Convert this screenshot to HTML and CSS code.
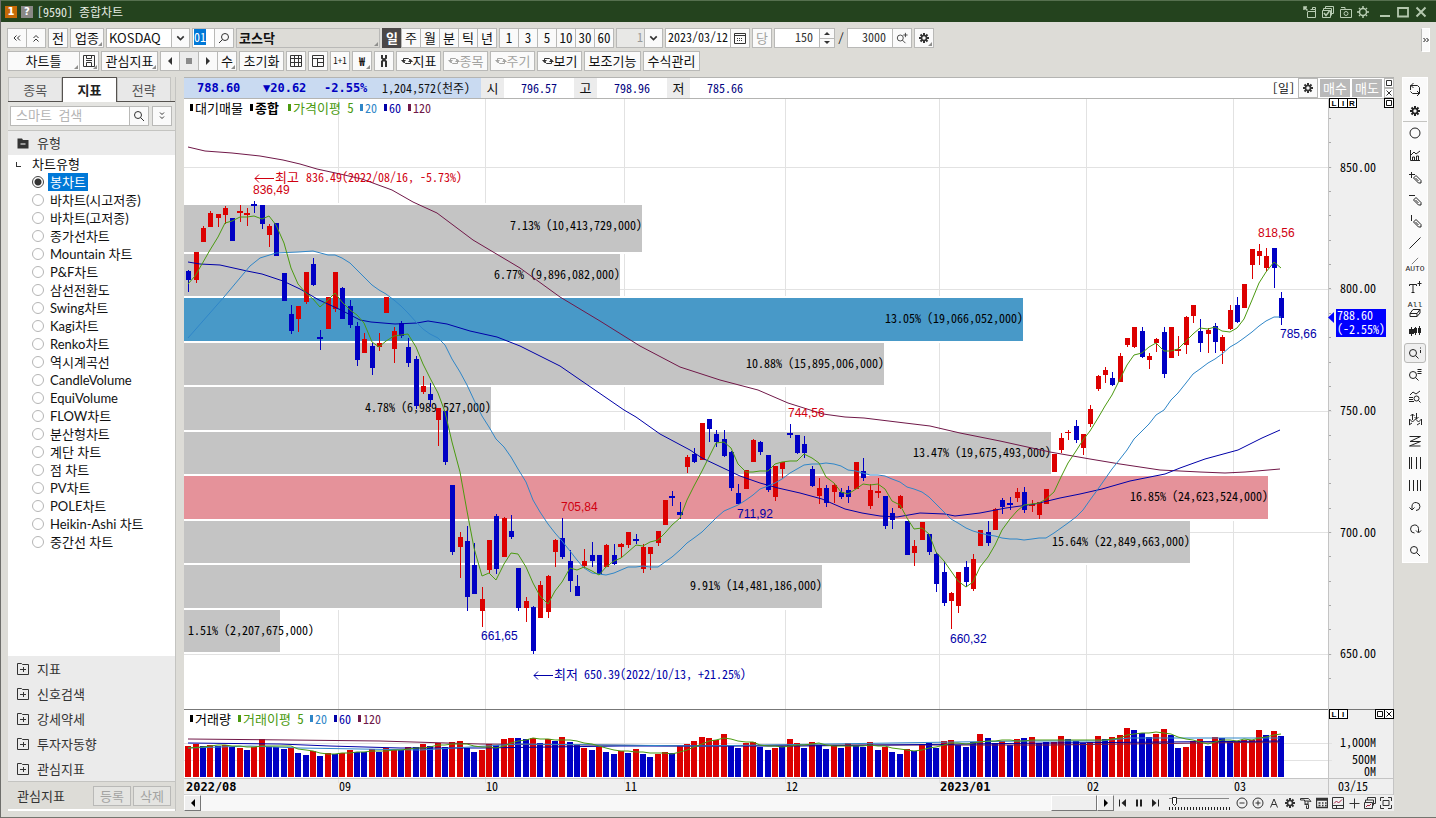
FILE: index.html
```html
<!DOCTYPE html>
<html lang="ko">
<head>
<meta charset="utf-8">
<title>[9590] 종합차트</title>
<link rel="stylesheet" href="styles.css">
</head>
<body>
<svg class="defs" aria-hidden="true">
  <symbol id="i-gear" viewBox="0 0 12 12"><path d="M6 1v10M1 6h10M2.500 2.500l7 7M9.500 2.500l-7 7" stroke="currentColor" stroke-width="2"/><circle cx="6" cy="6" r="3.200" fill="currentColor"/><circle cx="6" cy="6" r="1.700" fill="#fafafa"/></symbol>
  <symbol id="i-sun" viewBox="0 0 12 12"><circle cx="6" cy="6" r="3.500" fill="none" stroke="currentColor" stroke-width="1.500"/><path d="M6 0v2M6 10v2M0 6h2M10 6h2M2 2l1 1M9 9l1 1M10 2L9 3M2 10l1-1" stroke="currentColor" stroke-width="1.500"/></symbol>
  <symbol id="i-search" viewBox="0 0 12 12"><circle cx="5" cy="5" r="3.500" fill="none" stroke="currentColor"/><path d="M7.500 7.500L11 11" stroke="currentColor"/></symbol>
  <symbol id="i-searchr" viewBox="0 0 12 12"><circle cx="7" cy="5" r="3.500" fill="none" stroke="currentColor"/><path d="M4.500 7.500L1 11" stroke="currentColor"/></symbol>
  <symbol id="i-down" viewBox="0 0 12 12"><path d="M3 4.500l3 3 3-3" fill="none" stroke="currentColor" stroke-width="1.500"/></symbol>
  <symbol id="i-ddown" viewBox="0 0 12 12"><path d="M4 2.500l2 2 2-2M4 6.500l2 2 2-2" fill="none" stroke="currentColor"/></symbol>
  <symbol id="i-dup" viewBox="0 0 12 12"><path d="M3.500 6L6 3.500 8.500 6M3.500 9.500L6 7l2.500 2.500" fill="none" stroke="currentColor"/></symbol>
  <symbol id="i-dleft" viewBox="0 0 12 12"><path d="M5.500 3.500L3 6l2.500 2.500M9 3.500L6.500 6 9 8.500" fill="none" stroke="currentColor"/></symbol>
  <symbol id="i-dright" viewBox="0 0 12 12"><path d="M3.500 4l2 2-2 2M6.500 4l2 2-2 2" fill="none" stroke="currentColor"/></symbol>
  <symbol id="i-left" viewBox="0 0 12 12"><path d="M8 2v8L4 6z" fill="currentColor"/></symbol>
  <symbol id="i-right" viewBox="0 0 12 12"><path d="M4 2v8l4-4z" fill="currentColor"/></symbol>
  <symbol id="i-stop" viewBox="0 0 12 12"><path d="M3 3h6v6H3z" fill="currentColor"/></symbol>
  <symbol id="i-save" viewBox="0 0 12 12"><path d="M.5.5h11v11H.5zM3.500.5v3h5v-3M3.500 11.500v-4h5v4M3 5.500h6" fill="none" stroke="currentColor"/></symbol>
  <symbol id="i-grid" viewBox="0 0 12 12"><path d="M.5.5h11v11H.5zM.5 3.500h11M.5 7.500h11M4.500 .5v11M8.500 .5v11" fill="none" stroke="currentColor"/></symbol>
  <symbol id="i-layout" viewBox="0 0 12 12"><path d="M.5.5h11v11H.5zM.5 3.500h11M5.500 3.500v8M5.500 7.500h6" fill="none" stroke="currentColor"/></symbol>
  <symbol id="i-cal" viewBox="0 0 12 12"><path d="M.5 1.500h11v10H.5zM.5 3.500h11" fill="none" stroke="currentColor"/><path d="M3 6.500h6M3 8.500h6" stroke="currentColor" stroke-dasharray="1 1"/></symbol>
  <symbol id="i-tool" viewBox="0 0 12 12"><path d="M4 0v3l4 3.500V12M8 0v3L4 6.500V12" fill="none" stroke="currentColor" stroke-width="2"/></symbol>
  <symbol id="i-cycle" viewBox="0 0 12 12"><path d="M2.500 5.500v-2h5l2 2M9.500 6.500v2h-5l-2-2" fill="none" stroke="currentColor"/><path d="M0 5h5L2.500 8zM7 7h5L9.500 4z" fill="currentColor"/></symbol>
  <symbol id="i-zoomadd" viewBox="0 0 14 14"><circle cx="5" cy="7" r="3.500" fill="none" stroke="currentColor"/><path d="M7.500 9.500L11 13M8.500 3.500h5M11 1v5" stroke="currentColor"/></symbol>
  <symbol id="i-folder" viewBox="0 0 12 12"><path d="M1 1.500h4l1 1.500h5.500v8.500H.5V1.500z" fill="currentColor"/><path d="M3.500 7h5" stroke="#fff"/></symbol>
  <symbol id="i-plusbox" viewBox="0 0 12 12"><path d="M.5.5h4l1 1h6v10H.5zM3 6.500h6M6.500 4v5" fill="none" stroke="currentColor"/></symbol>
  <symbol id="i-out" viewBox="0 0 14 12"><path d="M1 4V1h3M1 1l3.500 3.500" fill="none" stroke="currentColor" stroke-width="1.500"/><path d="M4.500 5.500v6h8v-8h-5M5 5.500h7M9.500 3.500v-2h3v2" fill="none" stroke="currentColor"/></symbol>
  <symbol id="i-copy" viewBox="0 0 14 12"><path d="M4.500 2.500V.5h8v7h-2M2.500 4V2.500h8v7M1.500 4.500h8v7h-8z" fill="none" stroke="currentColor"/><path d="M3 7l2 2.500L8.500 5" fill="none" stroke="currentColor" stroke-width="1.500"/></symbol>
  <symbol id="i-camera" viewBox="0 0 14 12"><path d="M1.500 3.500h11v8h-11zM2 1.500h4v2" fill="none" stroke="currentColor"/><circle cx="7" cy="7.500" r="2" fill="none" stroke="currentColor"/></symbol>
  <symbol id="i-loop" viewBox="0 0 14 14"><path d="M2.500 8V3.500h7l2 2V8M11.500 8v3.500h-7l-2-2M5.500 1L3 3.500 5.500 6M9 9l2.500 2.500L9 14" fill="none" stroke="currentColor"/></symbol>
  <symbol id="i-circle" viewBox="0 0 14 14"><circle cx="7" cy="7" r="5" fill="none" stroke="currentColor"/></symbol>
  <symbol id="i-area" viewBox="0 0 14 14"><path d="M2.500 2v10.500H12M3 7l3-3 2 2 4-3M4.500 12V9h2v3M8.500 12V8h2v4" fill="none" stroke="currentColor"/></symbol>
  <symbol id="i-penplus" viewBox="0 0 14 14"><path d="M1 4.500h6M3.500 2v6M8 5.500l5 5v2.500h-2.500l-5-5zM7.500 8l3 3" fill="none" stroke="currentColor"/></symbol>
  <symbol id="i-penminus" viewBox="0 0 14 14"><path d="M1 3.500h6M8 5.500l5 5v2.500h-2.500l-5-5zM7.500 8l3 3" fill="none" stroke="currentColor"/></symbol>
  <symbol id="i-penbar" viewBox="0 0 14 14"><path d="M3.500 1v6M8 5.500l5 5v2.500h-2.500l-5-5zM7.500 8l3 3" fill="none" stroke="currentColor"/></symbol>
  <symbol id="i-line" viewBox="0 0 14 14"><path d="M1.500 12.500l11-11" stroke="currentColor"/></symbol>
  <symbol id="i-text" viewBox="0 0 14 14"><path d="M1.500 6V4.500h7V6M5 4.500V12M3.500 12.500h3M9.500 3.500h4M11.500 1v5" fill="none" stroke="currentColor"/></symbol>
  <symbol id="i-eraser" viewBox="0 0 14 8"><path d="M2 4.500L5 .5h7l-3 4zM2 4.500v3h7l3-3.500V.5M9 4.500v3" fill="none" stroke="currentColor"/></symbol>
  <symbol id="i-candles" viewBox="0 0 14 14"><path d="M1 5h5v5H1zM6 4h3v5H6zM10 4h3v5h-3z" fill="currentColor"/><path d="M3.500 3v9M7.500 3v8M11.500 2v9" stroke="currentColor"/></symbol>
  <symbol id="i-info" viewBox="0 0 14 14"><circle cx="5" cy="7" r="3.500" fill="none" stroke="currentColor"/><path d="M7.500 9.500L10.500 12.500M12.500 4v3M12.500 1.500v1" stroke="currentColor"/></symbol>
  <symbol id="i-zlist" viewBox="0 0 14 14"><circle cx="5" cy="7" r="3.500" fill="none" stroke="currentColor"/><path d="M7.500 9.500L10.500 12.500M9.500 1.500h4M9.500 3.500h4M9.500 5.500h4" stroke="currentColor"/></symbol>
  <symbol id="i-zchart" viewBox="0 0 14 14"><circle cx="8.500" cy="8.500" r="2.500" fill="none" stroke="currentColor"/><path d="M10.500 10.500l2 2M1 7.500h4M1 9.500h4M1 11.500h5M2 5l3-3 3 2 4-3" fill="none" stroke="currentColor"/></symbol>
  <symbol id="i-arrows" viewBox="0 0 14 14"><path d="M1.500 13V7l3 3 3-3 3 3 3-3v6M4.500 8V2M2.500 4l2-2 2 2M8.500 1v6M6.500 5l2 2 2-2M1 13l3-2M9 13l3-2" fill="none" stroke="currentColor"/></symbol>
  <symbol id="i-zig" viewBox="0 0 14 14"><path d="M1.500 2.500h11L2 7.500h10.500l-11 4.500h11" fill="none" stroke="currentColor"/></symbol>
  <symbol id="i-bars" viewBox="0 0 14 14"><path d="M1.500 1v12M3.500 1v12M8.500 1v12M12.500 1v12" stroke="currentColor"/></symbol>
  <symbol id="i-bars2" viewBox="0 0 14 14"><path d="M1.500 2v11M5.500 2v11M9.500 2v11M12.500 2v11" stroke="currentColor"/></symbol>
  <symbol id="i-undo" viewBox="0 0 14 14"><path d="M4 9V6a4 4 0 1 1 4 4.500M1.500 7.500L4 10l2.500-2.500" fill="none" stroke="currentColor"/></symbol>
  <symbol id="i-redo" viewBox="0 0 14 14"><path d="M10.500 10V6.500a4 4 0 1 0-4 4.500M8 8.500l2.500 2.500 2.500-2.500" fill="none" stroke="currentColor"/></symbol>
  <symbol id="i-first" viewBox="0 0 12 12"><path d="M2.500 2.500v7" stroke="currentColor"/><path d="M9 2v8L4.500 6z" fill="currentColor"/></symbol>
  <symbol id="i-last" viewBox="0 0 12 12"><path d="M9.500 2.500v7" stroke="currentColor"/><path d="M3 2v8l4.500-4z" fill="currentColor"/></symbol>
  <symbol id="i-pause" viewBox="0 0 12 12"><path d="M4 2.500v7M8 2.500v7" stroke="currentColor" stroke-width="2"/></symbol>
  <symbol id="i-minus" viewBox="0 0 12 12"><circle cx="6" cy="6" r="5" fill="none" stroke="currentColor"/><path d="M3.500 6h5" stroke="currentColor"/></symbol>
  <symbol id="i-plus" viewBox="0 0 12 12"><circle cx="6" cy="6" r="5" fill="none" stroke="currentColor"/><path d="M3.500 6h5M6 3.500v5" stroke="currentColor"/></symbol>
  <symbol id="i-a" viewBox="0 0 12 12"><path d="M2.500 10.500L6 2l3.500 8.500M4 7.500h4" fill="none" stroke="currentColor"/></symbol>
  <symbol id="i-hammer" viewBox="0 0 12 12"><path d="M.5 3V1.500h8L11 4.500 8.500 4H4.500V3zM5 4v3h3V4M4.500 7.500h4v4h-2v-3" fill="none" stroke="currentColor"/></symbol>
  <symbol id="i-table" viewBox="0 0 12 12"><path d="M.5 1.500h11v9H.5zM.5 3h11M2.500 6h2M6 6h1.500M9 6h1.500M2.500 8.500h2M6 8.500h1.500M9 8.500h1.500" fill="none" stroke="currentColor" stroke-width="1.300"/></symbol>
  <symbol id="i-chart" viewBox="0 0 12 12"><path d="M.5.5h11v11H.5zM.5 8.500h11M4.500 8.500v3" fill="none" stroke="currentColor"/><path d="M2 6.500l2.500-2.500 2 2L10 2.500" fill="none" stroke="#a02040"/></symbol>
  <symbol id="i-cross" viewBox="0 0 12 12"><path d="M1.500 6.500h10M6.500 1.500v10" stroke="currentColor"/></symbol>
  <symbol id="i-wins" viewBox="0 0 12 12"><path d="M3.500 3V.5h8v6H9M1.500 5V3h8v5.500M.5 5.500h8v6h-8z" fill="none" stroke="currentColor"/><path d="M2 10l2-2 1 1 2-2" fill="none" stroke="#a02040"/></symbol>
  <symbol id="i-full" viewBox="0 0 12 12"><path d="M.5 4V.5H4M8 .5h3.500V4M.5 8v3.500H4M8 11.500h3.500V8M3 3.500h6v5H3z" fill="none" stroke="currentColor"/></symbol>
  <symbol id="i-box" viewBox="0 0 8 8"><path d="M1.500 1.500h5v5h-5z" fill="none" stroke="currentColor"/></symbol>
  <symbol id="i-x" viewBox="0 0 8 8"><path d="M1.500 1.500l5 5M6.500 1.500l-5 5" fill="none" stroke="currentColor"/></symbol>
</svg>

<div class="window">
  <header class="titlebar">
    <span class="badge badge-one">1</span><span class="badge badge-q">?</span>
    <h1 class="title">[9590] 종합차트</h1>
    <div class="wintools">
      <svg class="ic14"><use href="#i-out"/></svg><svg class="ic14"><use href="#i-copy"/></svg><svg class="ic14"><use href="#i-camera"/></svg><svg class="ic12"><use href="#i-sun"/></svg>
    </div>
    <div class="winbtns">
      <button aria-label="최소화"><svg viewBox="0 0 12 12"><path d="M1 10h10" stroke="currentColor" stroke-width="2"/></svg></button>
      <button aria-label="최대화"><svg viewBox="0 0 12 12"><path d="M1 2h10v8.500H1z" fill="none" stroke="currentColor" stroke-width="1.800"/></svg></button>
      <button aria-label="닫기"><svg viewBox="0 0 12 12"><path d="M1.500 1.500l9 9M10.500 1.500l-9 9" stroke="currentColor" stroke-width="2"/></svg></button>
    </div>
  </header>

  <div class="toolbars">
    <div class="bars">
      <div class="bar">
        <div class="group"><button class="btn sq" aria-label="처음"><svg class="ic12"><use href="#i-dleft"/></svg></button><button class="btn sq" aria-label="접기"><svg class="ic12"><use href="#i-dup"/></svg></button></div>
        <button class="btn sq">전</button>
        <button class="btn w34 corner">업종</button>
        <div class="group combo">
          <select class="field code" aria-label="종목코드"><option>KOSDAQ</option></select><svg class="arrow"><use href="#i-down"/></svg>
        </div>
        <div class="group"><input class="field num2" value="01" aria-label="번호"><button class="btn sq" aria-label="검색"><svg class="ic12"><use href="#i-searchr"/></svg></button></div>
        <button class="btn name corner">코스닥</button>
        <div class="group"><button class="btn sq on">일</button><button class="btn sq">주</button><button class="btn sq">월</button><button class="btn sq">분</button><button class="btn sq">틱</button><button class="btn sq">년</button></div>
        <div class="group"><button class="btn sq">1</button><button class="btn sq">3</button><button class="btn sq">5</button><button class="btn sq">10</button><button class="btn sq">30</button><button class="btn sq">60</button></div>
        <div class="group combo"><select class="field tick" aria-label="단위" disabled><option>1</option></select><svg class="arrow"><use href="#i-down"/></svg></div>
        <div class="group"><input class="field date" value="2023/03/12" aria-label="날짜"><button class="btn sq" aria-label="달력"><svg class="ic12"><use href="#i-cal"/></svg></button></div>
        <button class="btn sq" disabled>당</button>
        <div class="group"><input class="field count" value="150" aria-label="봉 개수"><span class="spin"><button aria-label="증가"></button><button class="dn" aria-label="감소"></button></span></div>
        <span class="slash">/</span>
        <div class="group"><input class="field count" value="3000" aria-label="전체 개수"><button class="btn sq" aria-label="확대"><svg class="ic14"><use href="#i-zoomadd"/></svg></button></div>
        <button class="btn sq corner" aria-label="설정"><svg class="ic12"><use href="#i-gear"/></svg></button>
      </div>
      <div class="bar">
        <div class="group"><button class="btn w72 corner">차트틀</button><button class="btn sq corner" aria-label="저장"><svg class="ic12"><use href="#i-save"/></svg></button></div>
        <div class="group"><button class="btn w58 corner">관심지표</button></div>
        <div class="group"><button class="btn sq" aria-label="이전"><svg class="ic12"><use href="#i-left"/></svg></button><button class="btn sq dim" aria-label="정지"><svg class="ic12"><use href="#i-stop"/></svg></button><button class="btn sq" aria-label="다음"><svg class="ic12"><use href="#i-right"/></svg></button><button class="btn sq corner">수</button></div>
        <button class="btn w46">초기화</button>
        <button class="btn sq" aria-label="격자"><svg class="ic12"><use href="#i-grid"/></svg></button>
        <button class="btn sq" aria-label="배치"><svg class="ic12"><use href="#i-layout"/></svg></button>
        <button class="btn sq tiny">1+1</button>
        <button class="btn sq corner won">₩</button>
        <button class="btn sq" aria-label="도구"><svg class="ic12"><use href="#i-tool"/></svg></button>
        <button class="btn w46"><svg class="ic12"><use href="#i-cycle"/></svg>지표</button>
        <button class="btn w46" disabled><svg class="ic12"><use href="#i-cycle"/></svg>종목</button>
        <button class="btn w46" disabled><svg class="ic12"><use href="#i-cycle"/></svg>주기</button>
        <button class="btn w46"><svg class="ic12"><use href="#i-cycle"/></svg>보기</button>
        <button class="btn w58">보조기능</button>
        <button class="btn w58">수식관리</button>
      </div>
    </div>
    <button class="more" aria-label="더보기"><svg class="ic12"><use href="#i-dright"/></svg></button>
  </div>

  <main class="body">
    <aside class="side">
      <nav class="tabs"><button>종목</button><button class="on">지표</button><button>전략</button></nav>
      <div class="search"><div class="group"><input class="field query" placeholder="스마트 검색" aria-label="스마트 검색"><button class="btn sq" aria-label="찾기"><svg class="ic12"><use href="#i-search"/></svg></button></div><button class="btn sq" aria-label="펼치기"><svg class="ic12"><use href="#i-ddown"/></svg></button></div>
      <h2 class="sect"><svg class="ic12"><use href="#i-folder"/></svg>유형</h2>
      <div class="tree"><p class="root"><i class="elbow"></i>차트유형</p><ul id="types"></ul></div>
      <ul class="folders">
        <li><svg class="ic12"><use href="#i-plusbox"/></svg>지표</li><li><svg class="ic12"><use href="#i-plusbox"/></svg>신호검색</li><li><svg class="ic12"><use href="#i-plusbox"/></svg>강세약세</li><li><svg class="ic12"><use href="#i-plusbox"/></svg>투자자동향</li><li><svg class="ic12"><use href="#i-plusbox"/></svg>관심지표</li>
      </ul>
      <div class="fav"><span>관심지표</span><button class="btn" disabled>등록</button><button class="btn" disabled>삭제</button></div>
    </aside>

    <section class="chartbox">
      <div class="quote">
        <div class="now"><b class="last">788.60</b><b class="diff">▼20.62</b><b class="rate">-2.55%</b><span class="vol">1,204,572(천주)</span></div>
        <span class="k">시</span><span class="v">796.57</span><span class="k">고</span><span class="v">798.96</span><span class="k">저</span><span class="v">785.66</span>
        <span class="fill"></span><span class="mode">[일]</span>
        <button class="btn sq" aria-label="차트 설정"><svg class="ic12"><use href="#i-gear"/></svg></button><button class="trade">매수</button><button class="trade">매도</button>
        <span class="mini"><button aria-label="창 확대"><svg><use href="#i-box"/></svg></button><button aria-label="창 닫기"><svg><use href="#i-x"/></svg></button></span>
      </div>
      <div class="plot">
        <svg id="chart" viewBox="184 98 1210 697" role="img" aria-label="코스닥 일봉 차트"></svg>
      </div>
      <div class="scroll">
        <button class="sbtn" aria-label="왼쪽"><svg class="ic12"><use href="#i-left"/></svg></button><span class="track"><span class="thumb"></span></span><button class="sbtn" aria-label="오른쪽"><svg class="ic12"><use href="#i-right"/></svg></button>
        <div class="media"><svg class="ic12"><use href="#i-first"/></svg><svg class="ic12"><use href="#i-pause"/></svg><svg class="ic12"><use href="#i-last"/></svg></div>
        <svg class="ruler" viewBox="0 0 62 14"><path d="M0 2.500h60" stroke="#888"/><path d="M0 12.500h61" stroke="#222" stroke-width="3" stroke-dasharray="1 2"/><path d="M3.500 1.500h4v6l-2 2-2-2z" fill="#fff" stroke="#222"/></svg>
        <div class="view"><svg><use href="#i-minus"/></svg><svg><use href="#i-plus"/></svg><svg><use href="#i-a"/></svg><svg><use href="#i-gear"/></svg><svg><use href="#i-hammer"/></svg><svg><use href="#i-table"/></svg><svg><use href="#i-chart"/></svg><svg><use href="#i-cross"/></svg><svg><use href="#i-wins"/></svg><svg><use href="#i-full"/></svg></div>
      </div>
    </section>

    <nav class="tools" id="tools" aria-label="그리기 도구"></nav>
  </main>
</div>
<script src="app.js"></script>
</body>
</html>
```
FILE: styles.css
```css
* { box-sizing: border-box; }
body { margin: 0; background: #dddcd7; color: #111; font: 12px/16px "Noto Sans Mono CJK KR", "Noto Sans CJK KR", sans-serif; }
button, input, select { font: inherit; color: inherit; margin: 0; padding: 0; border-radius: 0; }
ul, p, h1, h2 { margin: 0; padding: 0; list-style: none; font-size: inherit; font-weight: normal; }
.defs { position: absolute; width: 0; height: 0; }
.ic12 { width: 12px; height: 12px; flex: none; display: block; }
.ic14 { width: 14px; height: 12px; flex: none; display: block; }
.window { min-height: 100vh; display: flex; flex-direction: column; border-left: 1px solid #6e6e6b; border-bottom: 2px solid #75756f; }

.titlebar { display: flex; align-items: center; gap: 4px; height: 22px; padding: 0 9px 0 4px; background: #24431e; border-top: 1px solid #56704f; color: #e4ebe2; }
.badge { width: 12px; height: 12px; font: bold 10px/12px "DejaVu Sans", sans-serif; text-align: center; color: #fff; }
.badge-one { background: #c66a08; }
.badge-q { background: #8a8886; }
.title { flex: 1; }
.wintools, .winbtns { display: flex; align-items: center; gap: 4px; color: #b9cdb4; }
.winbtns { margin-left: 6px; gap: 6px; }
.winbtns button { width: 12px; height: 12px; border: 0; background: none; color: #b4c8ae; }
.winbtns svg { display: block; width: 12px; height: 12px; }

.toolbars { display: flex; align-items: flex-start; padding: 6px; }
.bars { flex: 1; display: flex; flex-direction: column; gap: 3px; }
.bar { display: flex; align-items: center; gap: 2px; height: 20px; }
.group { display: flex; }
.group > * + .btn { margin-left: -1px; }
.btn { position: relative; display: inline-flex; align-items: center; justify-content: center; height: 20px; border: 1px solid #b9b9b7; background: #fafafa; white-space: nowrap; color: #111; font-size: 13px; }
.btn svg { color: #333; }
.btn:disabled, .btn:disabled svg { color: #a3a3a1; }
.sq { width: 20px; flex: none; }
.w34 { width: 34px; } .w46 { width: 45px; } .w58 { width: 57px; } .w72 { width: 73px; }
.corner::after { content: ""; position: absolute; right: 1px; bottom: 1px; border: 2px solid transparent; border-right-color: #8e8e8c; border-bottom-color: #8e8e8c; }
.btn.on { background: #4b4848; border-color: #4b4848; color: #fff; font-weight: bold; }
.dim { background: #ececec; }
.dim svg { color: #8b8b8b; }
.name { width: 144px; justify-content: flex-start; padding-left: 2px; background: #dddcd7; font-weight: bold; }
.tiny { font-size: 9px; }
.won { font-weight: bold; font-size: 12px; }
.field { height: 20px; border: 1px solid #b9b9b7; background: #fff; outline: 0; line-height: 16px; padding-bottom: 3px; }
.combo { position: relative; }
.combo select { appearance: none; }
.combo .arrow { position: absolute; right: 1px; top: 1px; width: 18px; height: 18px; padding: 2px; border-left: 1px solid #b9b9b7; background: #fafafa; color: #333; }
.combo .code { width: 84px; padding: 0 0 1px 2px; font: 13px/16px "Noto Sans CJK KR", sans-serif; }
.num2 { width: 23px; padding-left: 1px; }
.num2::selection { background: #0078d7; color: #fff; }
.tick { width: 47px; color: #999; background: #e8e8e6; }
.combo .tick { padding-left: 20px; opacity: 1; }
.date { width: 66px; padding-left: 2px; }
.count { width: 46px; padding-right: 6px; text-align: right; color: #333; }
.spin { display: flex; flex-direction: column; width: 15px; border: 1px solid #b9b9b7; border-left: 0; background: #fafafa; }
.spin button { flex: 1; display: flex; align-items: center; justify-content: center; border: 0; background: none; }
.spin button::after { content: ""; border: 3px solid transparent; border-top: 0; border-bottom: 3px solid #333; }
.spin .dn { border-top: 1px solid #b9b9b7; }
.spin .dn::after { border-top: 3px solid #333; border-bottom: 0; }
.slash { width: 8px; text-align: center; }
.more { width: 9px; height: 24px; border: 1px solid #fff; border-left-color: #b9b9b7; background: #fafafa; display: flex; align-items: center; justify-content: center; }

.body { flex: 1; display: flex; align-items: stretch; gap: 8px; padding: 0 8px 6px 7px; }
.side { width: 168px; flex: none; display: flex; flex-direction: column; border-right: 1px solid #c4c4c1; color: #333; background: #ebebeb; font-size: 13px; }
.tabs { display: flex; height: 25px; padding-right: 4px; background: #dddcd7; border-bottom: 1px solid #55524f; }
.tabs button { flex: 1; height: 24px; border: 1px solid #c4c4c1; border-bottom: 0; background: #e8e8e8; color: #555; }
.tabs .on { height: 25px; background: #fff; border-color: #55524f; font-weight: bold; color: #222; }
.search { display: flex; gap: 3px; padding: 4px 3px 4px 2px; background: #e4e4e1; border-bottom: 1px solid #c4c4c1; }
.search .group { flex: 1; }
.query { width: 10px; flex: 1; padding-left: 5px; }
.query::placeholder { color: #b4b4b4; }
.sect { display: flex; align-items: center; gap: 8px; height: 24px; padding-left: 9px; }
.tree { flex: 1; background: #fff; color: #111; font: 13px/18px Lato, "Noto Sans CJK KR", sans-serif; }
.root { display: flex; align-items: center; }
.elbow { width: 5px; height: 5px; margin: 0 11px 0 8px; border-left: 1px solid #333; border-bottom: 1px solid #333; }
.tree li { height: 18px; padding-left: 24px; }
.tree label { display: flex; align-items: center; gap: 4px; }
.tree input { appearance: none; width: 12px; height: 12px; border: 1px solid #b5b5b5; border-radius: 50%; background: #fff; }
.tree input:checked { border-color: #444; background: radial-gradient(#333 0 3px, #fff 4px); }
.tree label span { padding: 0 2px; }
.tree input:checked + span { background: #0078d7; color: #fff; }
.folders li { display: flex; align-items: center; gap: 8px; height: 25px; padding-left: 9px; }
.fav { display: flex; align-items: center; gap: 2px; height: 30px; padding: 0 4px 0 9px; background: #dddcd7; border-top: 1px solid #c4c4c1; border-bottom: 2px solid #fff; }
.fav span { flex: 1; }
.fav .btn { width: 38px; background: #e4e4e1; }

.chartbox { flex: 1; min-width: 0; background: #fff; border-top: 1px solid #b4b4b2; align-self: flex-start; }
.quote { display: flex; align-items: center; height: 20px; }
.now { display: flex; align-items: center; width: 297px; height: 20px; background: #c9daf1; padding-left: 13px; }
.now b { font: bold 12px/20px "DejaVu Sans Mono", monospace; color: #0000c0; }
.last { width: 66px; }
.diff { width: 61px; }
.rate { width: 58px; }
.k { width: 23px; line-height: 20px; text-align: center; background: #ececec; font-size: 13px; }
.v { width: 70px; text-align: center; color: #000080; }
.fill { flex: 1; }
.mode { width: 26px; }
.quote .btn { margin-right: 2px; }
.trade { width: 30px; height: 18px; margin-right: 2px; border: 0; background: #b9b9b9; color: #fff; font-size: 13px; }
.mini { display: flex; flex-direction: column; width: 10px; height: 20px; }
.mini button { flex: 1; display: flex; align-items: center; justify-content: center; border: 1px solid #b9b9b7; background: #fff; color: #333; }
.mini svg { width: 8px; height: 8px; flex: none; }
.plot svg { display: block; width: 100%; height: auto; }
.plot text { font-size: 12px; fill: #000; }
.plot .small { font: 12px "Liberation Sans", sans-serif; }
.plot .bold { font-weight: bold; }
.plot .ko { font-size: 13px; }
.plot .up { fill: #d00010; }
.plot .low { fill: #0000a8; }
.plot .white { fill: #fff; }
.plot .box { font: bold 8px "Liberation Sans", sans-serif; }
.plot .month { font: bold 12px "DejaVu Sans Mono", monospace; }

.scroll { display: flex; align-items: center; height: 16px; background: #efefef; color: #222; }
.sbtn { width: 17px; height: 16px; display: flex; align-items: center; justify-content: center; border: 1px solid #fff; border-right-color: #777; border-bottom-color: #777; background: #efefef; color: #000; }
.track { flex: 1; display: flex; justify-content: flex-end; height: 16px; background: #f8f8f8; }
.thumb { width: 46px; border: 1px solid #fff; border-right-color: #777; border-bottom-color: #777; background: #efefef; }
.media { display: flex; gap: 4px; margin: 0 8px 0 3px; }
.ruler { width: 62px; height: 14px; }
.view { display: flex; gap: 4px; margin: 0 2px 0 5px; }
.view svg { width: 12px; height: 12px; color: #333; }

.tools { width: 26px; align-self: flex-start; background: #fafafa; border: 1px solid #fff; display: flex; flex-direction: column; align-items: center; }
.tools button { display: flex; flex-direction: column; align-items: center; justify-content: center; width: 24px; height: 22px; border: 0; background: none; color: #222; font: 8px/8px "Liberation Mono", monospace; }
.tools button:nth-child(2) { border-bottom: 1px solid #c4c4c1; }
.tools svg { width: 14px; height: 14px; flex: none; }
.tools .half { height: 8px; }
.tools .on { width: 22px; height: 20px; margin: 1px 0; border: 1px solid #b9b9b7; border-radius: 3px; background: #efefef; }
```
FILE: app.js
```js
const types = ['봉차트', '바차트(시고저종)', '바차트(고저종)', '종가선차트', 'Mountain 차트', 'P&F차트', '삼선전환도', 'Swing차트', 'Kagi차트', 'Renko차트', '역시계곡선', 'CandleVolume', 'EquiVolume', 'FLOW차트', '분산형차트', '계단 차트', '점 차트', 'PV차트', 'POLE차트', 'Heikin-Ashi 차트', '중간선 차트'];
document.getElementById('types').innerHTML = types.map((t, i) =>
  `<li><label><input type="radio" name="type"${i ? '' : ' checked'}><span>${t.replace('&', '&amp;')}</span></label></li>`).join('');

const tools = ['loop', 'gear', 'circle', 'area', 'penplus', 'penminus', 'penbar', 'line', 'auto', 'text', 'all', 'candles', 'info', 'zlist', 'zchart', 'arrows', 'zig', 'bars', 'bars2', 'undo', 'redo', 'search'];
document.getElementById('tools').innerHTML = tools.map(t => {
  let inner = `<svg><use href="#i-${t}"/></svg>`;
  if (t === 'gear' || t === 'search') inner = `<svg viewBox="-1 -1 14 14"><use href="#i-${t}" width="12" height="12"/></svg>`;
  if (t === 'auto') inner = '<svg class="half"><use href="#i-line"/></svg>AUTO';
  if (t === 'all') inner = 'All<svg class="half"><use href="#i-eraser"/></svg>';
  return `<button aria-label="${t}"${t === 'info' ? ' class="on"' : ''}>${inner}</button>`;
}).join('');

const RED = '#dc0000', BLUE = '#0000c4', STEP = 7.333, X0 = 188.3;
const px = i => Math.round(X0 + i * STEP);

// colour, body top, body bottom, high, low
const candles = `B271,280,270,292 R252,280,252,283 R228,242,226,242 R213,227,211,227 R214,218,214,227 R208,215,206,224 B218,241,218,241 R211,213,205,222 R213,215,208,226 B204,206,201,213
B205,224,205,229 R226,235,224,247 B223,256,223,256 B273,301,273,301 B314,331,305,334 R306,319,306,332 R272,302,272,304 B264,285,258,286 B337,339,330,350 R297,329,297,329
R272,309,272,312 B288,319,287,319 B306,325,300,328 B326,360,322,366 R339,353,333,353 B346,368,343,375 R343,347,333,351 R297,313,297,313 R331,349,327,363 B323,336,321,338
B347,363,338,367 B359,406,356,409 R386,392,376,394 B394,400,383,407 R408,420,408,446 B411,462,411,465 B485,552,485,555 R537,547,532,578 B541,597,526,611 B565,594,543,594
R599,611,587,627 R540,570,540,573 B516,569,514,574 R518,557,517,557 B531,537,515,539 B568,608,568,611 R601,608,597,622 B607,651,606,654 R585,618,581,618 R576,612,575,618
R540,552,539,567 B538,557,518,559 B561,581,550,592 B586,596,575,596 R561,566,549,568 B555,561,542,567 B555,574,555,574 R545,567,544,567 B555,564,544,565 R544,547,543,558
R532,545,532,548 B539,541,534,544 R547,569,544,573 R547,554,547,570 R531,543,531,546 R500,525,500,525 B496,498,491,506 B512,515,502,519 R457,467,455,473 B454,462,448,463
R423,460,423,460 B419,429,419,442 B434,442,430,447 B439,456,430,457 B452,488,451,491 B493,504,484,504 R470,489,470,489 R440,462,439,462 B442,452,441,455 B455,490,455,492
R466,497,466,501 R462,469,462,478 B433,435,424,438 B435,453,435,454 B444,453,436,458 B469,486,466,487 R488,496,478,504 B488,503,485,507 R485,492,483,503 B492,497,488,499
B490,497,486,503 R462,489,462,489 B471,478,458,481 R490,506,484,509 R491,493,478,498 B496,526,496,529 B513,520,508,529 R496,508,495,509 B521,555,521,555 R546,553,540,566
R522,540,522,540 B534,552,534,555 B554,584,552,592 B572,603,561,606 R593,601,592,629 R572,606,572,613 B567,582,561,587 R559,589,554,591 R530,546,530,546 B532,543,521,546
R509,530,508,530 B500,507,498,514 B503,505,497,510 R492,498,488,502 B492,510,487,513 R504,506,500,512 R502,515,502,519 R489,504,489,504 R454,472,454,472 R438,450,433,453
R432,433,430,440 B426,440,420,443 R434,448,434,455 R409,424,405,427 R376,389,375,391 R370,375,367,383 B378,385,372,386 R356,382,353,382 R338,345,338,347 R327,347,327,348
B331,357,327,358 R356,360,353,369 R339,343,338,352 B332,374,327,378 R327,358,327,358 R349,351,336,356 R317,345,316,354 R305,316,305,323 B331,343,319,352 R330,334,328,353
B326,342,323,353 R337,351,335,364 R310,329,305,330 B305,322,297,323 R284,308,284,308 R249,265,249,279 R251,256,244,265 R256,268,248,271 B248,268,248,288 B298,318,292,325`
  .split(/\s+/).map(s => [s[0], ...s.slice(1).split(',').map(Number)]);

const volumes = `R746 R744 B746 R745 B746 R745 B747 R748 B750 R747 R739 B747 B747 B749 R748 B753 B755 R751 B756 R753 B754 R753 R750 B752 B752 R749 B752 R748 R750 B750
R747 B747 R744 B746 R743 B747 R742 R741 B748 B752 R750 R744 B745 R739 R738 B738 B739 R738 B743 R739 B741 R737 B742 B745 R748 B750 R747 B752 B754 R751
B753 R749 B754 B757 R754 R752 B753 R746 R744 R741 R737 R738 R740 R734 B745 B748 R743 R742 B747 B750 R748 B746 R739 R743 B748 R742 B745 B749 R746 B748
R743 B746 B747 R742 B750 R747 B752 B754 R749 B751 R744 B743 B748 R741 R740 B745 B747 B742 R734 B738 B743 R741 B745 R739
B738 R737 B743 B742 R742 R736 B739 B741 B743 R742 R736 B739 R737 R735 R728 B730 B733 B737 R734 R729 B735 B748 R747 R741 R739 B746 R737 B738 B741 R741 R740 R740 R730 B735 R731 B736`
  .split(/\s+/).map(s => [s[0], Number(s.slice(1))]);

const average = (vals, n, head) => {
  const pts = head.slice();
  for (let i = n - 1; i < vals.length; i++) {
    pts.push([px(i), Math.round(vals.slice(i - n + 1, i + 1).reduce((a, b) => a + b) / n)]);
  }
  return pts;
};
const line = (pts, color) => `<polyline points="${pts.join(' ')}" fill="none" stroke="${color}"/>`;
const rect = (x, y, w, h, fill) => `<rect x="${x}" y="${y}" width="${w}" height="${h}" fill="${fill}"/>`;
const text = (x, y, s, cls = '', extra = '') => `<text x="${x}" y="${y}" class="${cls}" ${extra}>${s}</text>`;
const END = 'text-anchor="end"', GREEN = '#4b9a10', SKY = '#2f86c8', NAVY = '#0000a8', PLUM = '#701848';

const out = [];
out.push(rect(184, 98, 1210, 697, '#fff'), rect(1328, 98, 66, 697, '#efefef'), rect(184, 779, 1210, 16, '#efefef'));
for (const x of [338, 485, 624, 785, 939, 1086, 1233]) out.push(rect(x, 99, 1, 684, '#e2e2e2'));
for (const y of [167, 289, 411, 532, 654, 743, 760]) out.push(rect(184, y, 1148, 1, '#e2e2e2'));
for (let y = 118; y < 700; y += 24.35) out.push(rect(1328, Math.round(y), 3, 1, '#aaa'));

const GRAY = '#c4c4c4';
[[205, 47, 642, '7.13% (10,413,729,000)', GRAY], [254, 42, 620, '6.77% (9,896,082,000)', GRAY], [298, 43, 1023, '13.05% (19,066,052,000)', '#4899c8'],
 [343, 42, 884, '10.88% (15,895,006,000)', GRAY], [387, 43, 491, '4.78% (6,989,527,000)', GRAY], [432, 42, 1051, '13.47% (19,675,493,000)', GRAY],
 [476, 43, 1268, '16.85% (24,623,524,000)', '#e5929a'], [521, 42, 1190, '15.64% (22,849,663,000)', GRAY], [565, 43, 822, '9.91% (14,481,186,000)', GRAY],
 [610, 42, 280, '1.51% (2,207,675,000)', GRAY]].forEach(([y, h, x, s, c]) => {
  out.push(rect(184, y - 2, x - 184, h + 4, '#fff'), rect(184, y, x - 184, h, c));
  out.push(x < 300 ? text(188, y + 25, s) : text(x, y + 25, s, '', END));
});

candles.forEach(([c, t, b, h, l], i) => {
  const color = c === 'R' ? RED : BLUE;
  out.push(rect(px(i), h, 1, Math.max(l - h, 1), color), rect(px(i) - (b - t > 3 ? 2 : 3), t, b - t > 3 ? 5 : 6, Math.max(b - t, 1), color));
});
const closes = candles.map(([c, t, b]) => c === 'R' ? t : b);
out.push(line([[188, 147], [205, 151], [232, 153], [260, 156], [283, 160], [300, 164], [317, 169], [340, 174], [362, 179], [392, 190], [413, 202], [437, 213], [473, 240], [520, 268], [560, 297], [600, 321], [640, 346], [680, 367], [720, 380], [758, 390], [788, 403], [823, 414], [845, 417], [864, 418], [905, 423], [930, 426], [960, 433], [1000, 441], [1050, 452], [1090, 459], [1120, 464], [1160, 470], [1200, 472], [1225, 473], [1245, 472], [1280, 469]], PLUM));
out.push(line([[188, 262], [200, 264], [220, 265], [247, 271], [262, 274], [283, 281], [300, 289], [319, 300], [341, 310], [360, 320], [371, 322], [395, 324], [417, 323], [428, 321], [447, 324], [470, 331], [497, 337], [520, 346], [560, 366], [592, 388], [624, 410], [636, 417], [660, 434], [690, 450], [702, 458], [740, 476], [760, 483], [778, 488], [800, 493], [822, 499], [845, 509], [862, 513], [880, 516], [897, 517], [920, 513], [945, 514], [955, 516], [980, 513], [1006, 508], [1035, 504], [1060, 498], [1080, 494], [1102, 489], [1130, 481], [1165, 474], [1180, 468], [1205, 459], [1238, 450], [1262, 438], [1280, 430]], NAVY));
out.push(line(average(closes, 20, [[188, 338], [224, 297], [250, 266], [260, 258], [276, 253], [298, 252], [313, 251]]), SKY));
out.push(line(average(closes, 5, [[188, 284], [195, 276], [202, 264], [210, 250]]), GREEN));

out.push('<path d="M274 178.500h-19M259 174.500l-4 4 4 4" fill="none" stroke="#d00010"/>', text(275, 182, '최고', 'up ko'), text(306, 182, '836.49(2022/08/16, -5.73%)', 'up'));
out.push('<path d="M553 675.500h-19M538 671.500l-4 4 4 4" fill="none" stroke="#0000a8"/>', text(554, 679, '최저', 'low ko'), text(584, 679, '650.39(2022/10/13, +21.25%)', 'low'));
[[253, 194, '836,49', 'up'], [561, 511, '705,84', 'up'], [788, 417, '744,56', 'up'], [1258, 237, '818,56', 'up'],
 [481, 640, '661,65', 'low'], [737, 518, '711,92', 'low'], [950, 643, '660,32', 'low'], [1280, 338, '785,66', 'low']]
  .forEach(([x, y, s, c]) => out.push(text(x, y, s, 'small ' + c)));

volumes.forEach(([c, y], i) => out.push(rect(px(i) - 3, y, 6, 777 - y, c === 'R' ? RED : BLUE)));
out.push(line([[188, 739], [290, 740], [380, 741], [480, 744], [700, 746], [800, 745], [1050, 745], [1280, 742]], PLUM));
out.push(line([[188, 743], [280, 744], [330, 746], [400, 748], [480, 748], [620, 746], [800, 746], [1050, 743], [1280, 741]], NAVY));
out.push(line([[188, 748], [250, 746], [300, 748], [420, 750], [520, 744], [700, 746], [1020, 741], [1100, 741], [1130, 738], [1280, 738]], SKY));
out.push(line(average(volumes.map(v => v[1]), 5, [[188, 748], [202, 747]]), GREEN));

out.push(rect(184, 98, 1210, 1, '#b4b4b2'), rect(184, 709, 1210, 1, '#777'), rect(184, 778, 1210, 1, '#c4c4c4'), rect(184, 794, 1210, 1, '#d0d0d0'));
out.push(rect(1328, 98, 1, 697, '#c4c4c4'), rect(1393, 98, 1, 697, '#c4c4c4'));

const legend = (y, items) => items.forEach(([x, s, c, cls]) =>
  out.push(rect(x, y - 9, 3, 7, c), `<text x="${x + 5}" y="${y}" class="${cls || ''}" style="fill:${c}">${s}</text>`));
legend(113, [[190, '대기매물', '#000', 'ko'], [250, '종합', '#000', 'ko bold'], [288, '가격이평 5', GREEN, 'ko'], [360, '20', SKY], [384, '60', NAVY], [408, '120', PLUM]]);
legend(724, [[190, '거래량', '#000', 'ko'], [238, '거래이평 5', GREEN, 'ko'], [310, '20', SKY], [334, '60', NAVY], [358, '120', PLUM]]);

[[172, '850.00'], [293, '800.00'], [415, '750.00'], [537, '700.00'], [658, '650.00']].forEach(([y, s]) => out.push(text(1376, y, s, '', END)));
[[747, '1,000M'], [764, '500M'], [776, '0M']].forEach(([y, s]) => out.push(text(1376, y, s, '', END)));
out.push('<path d="M1328 317.500l6-5.500v11z" fill="#00f"/>', rect(1336, 309, 50, 28, '#00f'), text(1337, 320, '788.60', 'white'), text(1337, 334, '(-2.55%)', 'white'));

[[186, '2022/08', 'month'], [339, '09'], [486, '10'], [625, '11'], [786, '12'], [940, '2023/01', 'month'], [1087, '02'], [1234, '03'], [1338, '03/15']]
  .forEach(([x, s, c]) => out.push(text(x, 791, s, c)));

const frame = (x, y) => `<rect x="${x + 0.5}" y="${y + 0.5}" width="9" height="9" fill="#fff" stroke="#000"/>`;
const box = (x, y, s) => out.push(frame(x, y), text(x + 5, y + 8, s, 'box', 'text-anchor="middle"'));
const icon = (x, y, id) => out.push(frame(x, y), `<use href="#i-${id}" x="${x + 1}" y="${y + 1}" width="8" height="8"/>`);
box(1329, 98, 'L'); box(1338, 98, 'I'); box(1347, 98, 'R'); icon(1384, 98, 'box');
box(1329, 709, 'L'); box(1338, 709, 'I'); icon(1375, 709, 'box'); icon(1384, 709, 'x');

document.getElementById('chart').innerHTML = out.join('');
const code = document.querySelector('.num2');
code.focus({ preventScroll: true });
code.select();
```
